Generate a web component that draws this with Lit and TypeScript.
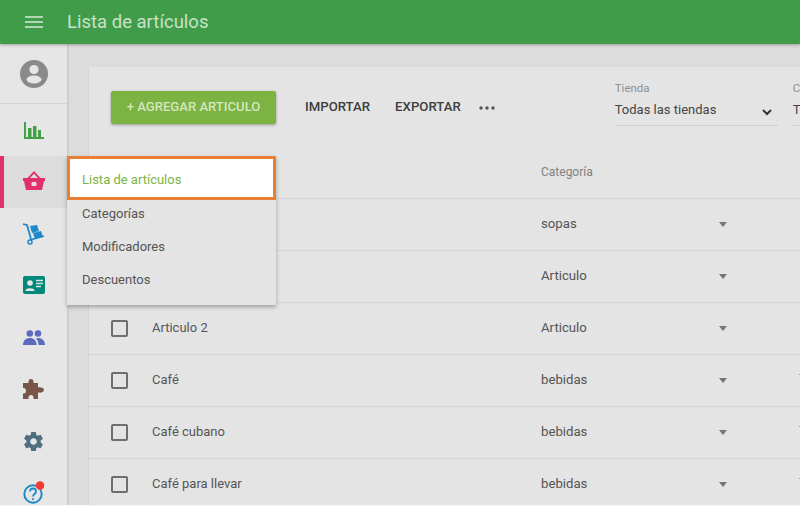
import { LitElement, html, css, svg } from "lit";
import { customElement } from "lit/decorators.js";

const rows = [
  { name: "", cat: "sopas", extra: false },
  { name: "", cat: "Articulo", extra: false },
  { name: "Articulo 2", cat: "Articulo", extra: false },
  { name: "Café", cat: "bebidas", extra: true },
  { name: "Café cubano", cat: "bebidas", extra: true },
  { name: "Café para llevar", cat: "bebidas", extra: true },
];

const icon = (w: number, h: number, vb: string, body: unknown) =>
  html`<svg width=${w} height=${h} viewBox=${vb}>${body}</svg>`;

@customElement("app-root")
export class AppRoot extends LitElement {
  static styles = css`
    :host { display: block; width: 800px; height: 506px; overflow: hidden; position: relative; background: #f4f4f4; font-family: Roboto, "Liberation Sans", sans-serif; }
    .top { height: 44px; background: #409c49; display: flex; align-items: center; box-shadow: 0 1px 3px rgba(0,0,0,.3); position: relative; z-index: 2; }
    .burger { width: 67px; display: flex; justify-content: center; }
    .title { color: #c8e2ca; font-size: 18.5px; }
    .body { display: flex; height: 461px; background: #dcdcdc; }
    .side { width: 67px; flex: none; background: #e6e6e6; box-shadow: 1px 0 2px rgba(0,0,0,.12); display: flex; flex-direction: column; }
    .profile { height: 59px; flex: none; border-bottom: 1px solid #d6d6d6; display: flex; align-items: center; justify-content: center; }
    .nav { height: 52px; flex: none; display: flex; align-items: center; justify-content: center; }
    .nav.up { padding-bottom: 2px; box-sizing: border-box; }
    .nav.up2 { padding-bottom: 4px; box-sizing: border-box; }
    .nav.active { background: #dcdcdc; border-left: 4px solid #e0306e; padding-right: 4px; padding-bottom: 3px; box-sizing: border-box; }
    .main { flex: 1; min-width: 0; padding: 23px 0 0 22px; overflow: hidden; }
    .card { width: 800px; height: 440px; background: #e4e4e4; box-shadow: 0 1px 2px rgba(0,0,0,.1); }
    .toolbar { height: 80px; display: flex; align-items: flex-start; padding: 0 0 0 22px; }
    .add { flex: none; margin-top: 24px; width: 165px; height: 33px; padding-bottom: 2px; box-sizing: border-box; background: #7cb342; color: #d5e6c0; font-size: 13.1px; font-weight: 500; display: flex; align-items: center; justify-content: center; border-radius: 2px; box-shadow: 0 1px 3px rgba(0,0,0,.35); white-space: nowrap; }
    .act { flex: none; margin-top: 24px; height: 33px; padding-bottom: 2px; box-sizing: border-box; display: flex; align-items: center; color: #3d3d3d; font-size: 13.2px; font-weight: 500; white-space: nowrap; }
    .act.imp { margin-left: 29px; }
    .act.exp { margin-left: 25px; }
    .dots { flex: none; margin-top: 24px; height: 33px; margin-left: 18px; display: flex; align-items: center; }
    .filter { width: 163px; margin-left: 120px; flex: none; padding-top: 14px; }
    .filter.next { margin-left: 15px; }
    .flabel { font-size: 11.5px; color: #8f8f8f; line-height: 14px; white-space: nowrap; }
    .fval { height: 30px; padding-bottom: 2px; display: flex; align-items: center; justify-content: space-between; font-size: 13px; color: #444; border-bottom: 1px solid #cfcfcf; white-space: nowrap; padding-right: 6px; box-sizing: border-box; margin-top: 1px; }
    .fval svg { margin-top: 6px; }
    .row { display: flex; align-items: center; height: 52px; box-sizing: border-box; border-top: 1px solid #d4d4d4; }
    .row.head { height: 51px; border-top: none; }
    .check { width: 17px; height: 17px; box-sizing: border-box; border: 2px solid #6e6e6e; border-radius: 2px; margin-left: 22px; flex: none; }
    .check.none { border: none; }
    .name { width: 389px; margin-left: 24px; padding-bottom: 2px; flex: none; font-size: 13px; color: #555; white-space: nowrap; }
    .cat { width: 177px; padding-bottom: 2px; flex: none; font-size: 13.2px; color: #555; }
    .head .cat { font-size: 12px; color: #808080; padding-bottom: 2px; }
    .caret { width: 10px; height: 5px; flex: none; display: block; }
    .caret.b { margin-left: 70px; margin-bottom: 8px; }
    .menu { position: absolute; left: 67px; top: 156px; width: 209px; height: 149px; background: #e4e4e4; box-shadow: 0 2px 4px rgba(0,0,0,.3); z-index: 3; font-size: 13px; color: #555; }
    .mi { height: 33.4px; display: flex; align-items: center; padding-left: 15px; }
    .mi.on { height: 44px; box-sizing: border-box; background: #fff; border: 3px solid #e87f33; padding: 3px 0 0 12px; color: #7cb342; margin-bottom: -3.5px; position: relative; z-index: 1; }
    .strip { position: absolute; left: 0; right: 0; bottom: 0; height: 1px; background: #f6f6f6; z-index: 4; }
  `;

  render() {
    const caret = (c = "") => html`<svg class="caret ${c}" viewBox="0 0 10 5"><path d="M1 0h8L5 5z" fill="#757575"/></svg>`;
    return html`
      <div class="top">
        <div class="burger">
          ${icon(18, 12, "0 0 18 12", svg`<path d="M0 1h18M0 6h18M0 11h18" stroke="#d6e9d7" stroke-width="1.6" fill="none"/>`)}
        </div>
        <div class="title">Lista de artículos</div>
      </div>
      <div class="body">
        <div class="side">
          <div class="profile">
            ${icon(28, 28, "0 0 28 28", svg`<circle cx="14" cy="14" r="14" fill="#8a8a8a"/><circle cx="14" cy="9.5" r="4.6" fill="#e6e6e6"/><ellipse cx="14" cy="19.5" rx="7.5" ry="4" fill="#e6e6e6"/>`)}
          </div>
          <div class="nav">
            ${icon(20, 17, "0 0 20 17", svg`<path fill="#43a047" d="M0 0h2v15h2V6h3.500v9H9V4h3.500v11H14V8h3v7h3v2H0z"/>`)}
          </div>
          <div class="nav active">
            ${icon(22, 19, "0 0 22 19", svg`<path fill="#e0306e" d="M0 7h4.500L11 0l6.500 7H22v3h-1l-2 9H3L1 10H0zM7 7h8l-4-4.300z"/><rect x="8.500" y="11" width="5" height="4" rx="1" fill="#e6dde0"/>`)}
          </div>
          <div class="nav">
            ${icon(22, 22, "0 0 22 22", svg`<path d="M0 1l4 1 4 14" stroke="#1e88c9" stroke-width="1.800" fill="none"/><path fill="#1e88c9" d="M7 3l7-1 2 6-7 2zM10 10l8-2 2 6-8 2z"/><path d="M7 17l14-4" stroke="#1e88c9" stroke-width="1.800"/><circle cx="7" cy="19" r="2" fill="none" stroke="#1e88c9" stroke-width="1.500"/>`)}
          </div>
          <div class="nav up">
            ${icon(22, 18, "0 0 22 18", svg`<rect width="22" height="18" rx="2" fill="#00897b"/><circle cx="7" cy="7" r="2.800" fill="#e6e6e6"/><path d="M2.500 14.500c0-3 9-3 9 0V15h-9z" fill="#e6e6e6"/><path d="M13 4.500h7M13 7.500h7M13 10.500h5" stroke="#cfe5e2" stroke-width="1.300"/>`)}
          </div>
          <div class="nav up">
            ${icon(22, 15, "0 0 22 15", svg`<g fill="#5c6bc0"><circle cx="6.800" cy="3.500" r="3.300"/><circle cx="15" cy="3.500" r="3.300"/><path d="M0 15c0-4.500 3-7 6.800-7s6.800 2.500 6.800 7z"/><path d="M15 8c4 0 7 2.500 7 7h-6.500c0-3-.8-4.800-2.500-6.300.6-.4 1.300-.7 2-.7z"/></g>`)}
          </div>
          <div class="nav up">
            ${icon(21, 20, "0 0 21 20", svg`<path fill="#795548" d="M0 4h5.500C5 1 6.500 0 8 0s3 1 2.500 4H15v4.500c3-.5 6 .5 6 2.500s-3 3-6 2.500V20h-4.500c.5-3-1-4-2.500-4s-3 1-2.500 4H0v-5.500c2 .5 3-1 3-2.500S2 8.500 0 9z"/>`)}
          </div>
          <div class="nav up">
            ${icon(23, 23, "0 0 24 24", svg`<path fill="#4f6f80" fill-rule="evenodd" d="M19.430 12.980c.04-.32.070-.64.070-.98s-.03-.66-.07-.98l2.110-1.650c.19-.15.240-.42.120-.64l-2-3.460c-.12-.22-.39-.3-.61-.22l-2.490 1c-.52-.4-1.080-.73-1.690-.98l-.38-2.650C14.460 2.180 14.250 2 14 2h-4c-.25 0-.46.180-.49.420l-.38 2.650c-.61.25-1.170.59-1.690.98l-2.490-1c-.23-.09-.49 0-.61.220l-2 3.460c-.13.22-.07.49.12.640l2.110 1.650c-.04.32-.07.65-.07.98s.03.66.07.98l-2.110 1.650c-.19.15-.24.42-.12.640l2 3.460c.12.22.39.3.61.22l2.490-1c.52.4 1.080.73 1.690.98l.38 2.650c.03.24.24.42.49.42h4c.25 0 .46-.18.49-.42l.38-2.650c.61-.25 1.170-.59 1.690-.98l2.490 1c.23.09.49 0 .61-.22l2-3.460c.12-.22.070-.49-.12-.64l-2.110-1.650zM12 15.500c-1.930 0-3.500-1.570-3.500-3.500s1.570-3.500 3.500-3.500 3.500 1.570 3.500 3.500-1.570 3.500-3.500 3.500z"/>`)}
          </div>
          <div class="nav up2">
            ${icon(24, 24, "0 0 24 24", svg`<circle cx="11" cy="14" r="8.700" fill="none" stroke="#1e88c9" stroke-width="2"/><path d="M8 11.500c0-4 6-4 6 0 0 2.500-3 2.500-3 5" fill="none" stroke="#1e88c9" stroke-width="1.800"/><circle cx="11" cy="19" r="1.100" fill="#1e88c9"/><circle cx="18" cy="5.500" r="4.300" fill="#ee3b33"/>`)}
          </div>
        </div>
        <div class="main">
          <div class="card">
            <div class="toolbar">
              <div class="add">+ AGREGAR ARTICULO</div>
              <div class="act imp">IMPORTAR</div>
              <div class="act exp">EXPORTAR</div>
              <div class="dots">${icon(16, 4, "0 0 16 4", svg`<g fill="#555"><circle cx="2" cy="2" r="1.700"/><circle cx="8" cy="2" r="1.700"/><circle cx="14" cy="2" r="1.700"/></g>`)}</div>
              <div class="filter store">
                <div class="flabel">Tienda</div>
                <div class="fval">Todas las tiendas
                  ${icon(10, 7, "0 0 10 7", svg`<path d="M1 1l4 4 4-4" fill="none" stroke="#333" stroke-width="2"/>`)}
                </div>
              </div>
              <div class="filter next">
                <div class="flabel">Categoría</div>
                <div class="fval">Todos los artículos</div>
              </div>
            </div>
            <div class="row head">
              <div class="check none"></div>
              <div class="name"></div>
              <div class="cat">Categoría</div>
            </div>
            ${rows.map(
              (r) => html`<div class="row">
                <div class="check"></div>
                <div class="name">${r.name}</div>
                <div class="cat">${r.cat}</div>
                ${caret()}
                ${r.extra ? caret("b") : ""}
              </div>`
            )}
          </div>
        </div>
      </div>
      <div class="menu">
        <div class="mi on">Lista de artículos</div>
        <div class="mi">Categorías</div>
        <div class="mi">Modificadores</div>
        <div class="mi">Descuentos</div>
      </div>
      <div class="strip"></div>
    `;
  }
}
